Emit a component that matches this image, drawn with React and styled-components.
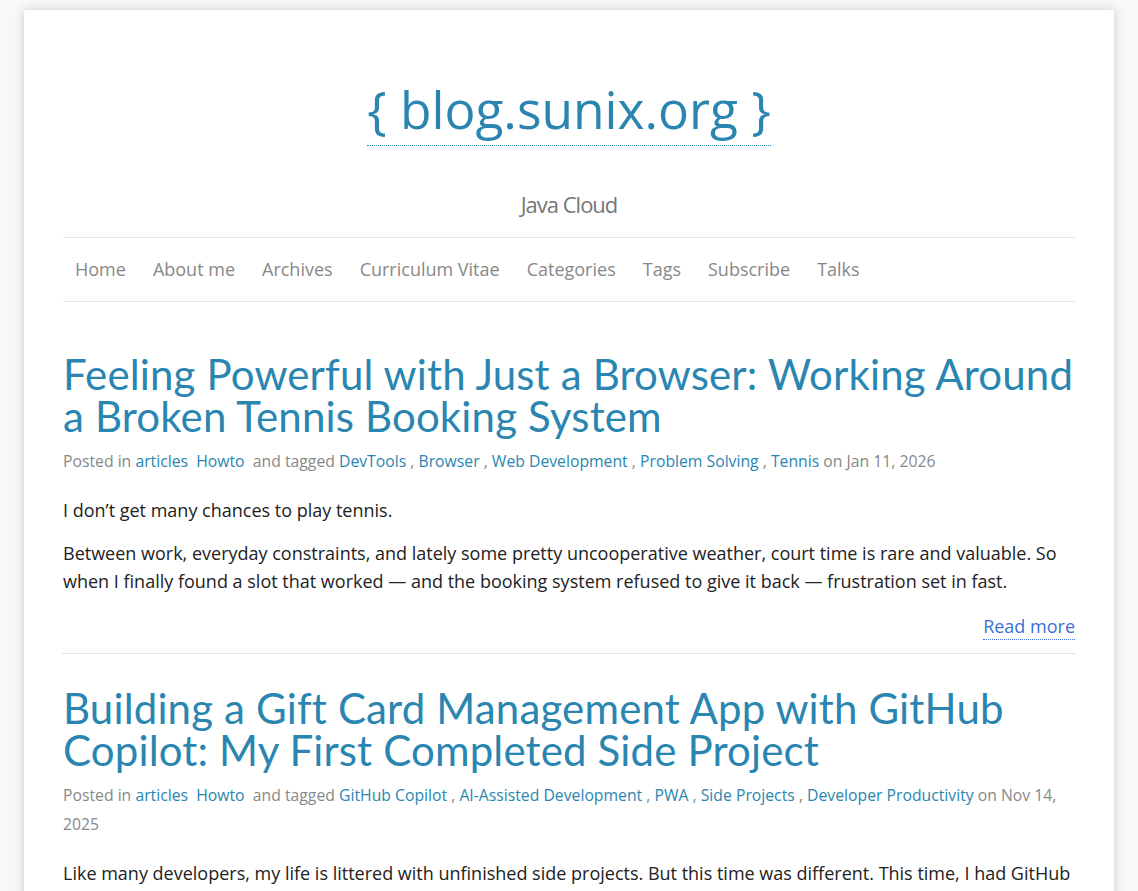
import React from "react";
import styled, { createGlobalStyle } from "styled-components";

const GlobalStyle = createGlobalStyle`
  html, body {
    margin: 0;
    padding: 0;
    background: #f8f8f8;
    font-family: "Open Sans", "Noto Sans", sans-serif;
    color: #222;
  }
  * {
    box-sizing: border-box;
  }
`;

const Page = styled.div`
  padding: 10px 24px 0;
`;

const Card = styled.div`
  background: #fff;
  box-shadow: 0 0 10px rgba(0, 0, 0, 0.18);
  padding: 0 39px 40px;
`;

const Header = styled.header`
  display: flex;
  flex-direction: column;
  align-items: center;
  padding-top: 74px;
`;

const SiteTitle = styled.a`
  font-size: 51.5px;
  line-height: 1;
  color: #2a86b0;
  text-decoration: none;
  border-bottom: 1px dotted #2a86b0;
  padding-bottom: 9px;
`;

const Tagline = styled.p`
  margin: 43px 0 0;
  font-size: 22px;
  letter-spacing: -1px;
  color: #777;
  line-height: 30px;
`;

const Nav = styled.nav`
  align-self: stretch;
  display: flex;
  gap: 27px;
  margin-top: 18px;
  padding: 0 12px;
  height: 65px;
  align-items: center;
  border-top: 1px solid #e6e6e6;
  border-bottom: 1px solid #e6e6e6;
`;

const NavItem = styled.a`
  font-size: 18px;
  color: #888;
  text-decoration: none;
`;

const Post = styled.article`
  padding-top: 51px;
  & + & {
    padding-top: 33px;
  }
  border-bottom: ${(p) => (p.last ? "none" : "1px dotted #ccc")};
  padding-bottom: ${(p) => (p.last ? "0" : "13px")};
`;

const PostTitle = styled.h2`
  margin: 0;
  font-family: Lato, "Open Sans", sans-serif;
  font-size: 42px;
  font-weight: 400;
  line-height: 42px;
  letter-spacing: 0.15px;
  color: #2a86b0;
`;

const Meta = styled.div`
  margin-top: 10px;
  font-size: 15.75px;
  line-height: 29px;
  color: #888;
`;

const MetaLink = styled.a`
  color: #2a86b0;
  text-decoration: none;
`;

const Body = styled.div`
  margin-top: 20px;
  font-size: 18px;
  line-height: 28px;
  color: #222;
  p {
    margin: 0 0 15px;
  }
`;

const ReadMoreRow = styled.div`
  display: flex;
  justify-content: flex-end;
  padding-top: 3px;
`;

const ReadMore = styled.a`
  font-size: 18px;
  line-height: 26px;
  color: #3b6fd8;
  text-decoration: none;
  border-bottom: 1px dotted #3b6fd8;
`;

const navItems = [
  "Home",
  "About me",
  "Archives",
  "Curriculum Vitae",
  "Categories",
  "Tags",
  "Subscribe",
  "Talks",
];

const posts = [
  {
    title:
      "Feeling Powerful with Just a Browser: Working Around a Broken Tennis Booking System",
    tags: ["DevTools", "Browser", "Web Development", "Problem Solving", "Tennis"],
    date: "Jan 11, 2026",
    paragraphs: [
      "I don’t get many chances to play tennis.",
      "Between work, everyday constraints, and lately some pretty uncooperative weather, court time is rare and valuable. So when I finally found a slot that worked — and the booking system refused to give it back — frustration set in fast.",
    ],
  },
  {
    title:
      "Building a Gift Card Management App with GitHub Copilot: My First Completed Side Project",
    tags: [
      "GitHub Copilot",
      "AI-Assisted Development",
      "PWA",
      "Side Projects",
      "Developer Productivity",
    ],
    date: "Nov 14, 2025",
    paragraphs: [
      "Like many developers, my life is littered with unfinished side projects. But this time was different. This time, I had GitHub Copilot at my side to help me get it over the finish line.",
    ],
  },
];

const PostEntry = ({ post, last }) => (
  <Post last={last}>
    <PostTitle>{post.title}</PostTitle>
    <Meta>
      Posted in <MetaLink href="#">articles</MetaLink>&nbsp; <MetaLink href="#">Howto</MetaLink>&nbsp;
      and tagged{" "}
      {post.tags.map((tag, i) => (
        <React.Fragment key={tag}>
          <MetaLink href="#">{tag}</MetaLink>
          {i < post.tags.length - 1 ? " , " : " "}
        </React.Fragment>
      ))}
      on {post.date}
    </Meta>
    <Body>
      {post.paragraphs.map((p) => (
        <p key={p}>{p}</p>
      ))}
    </Body>
    {!last && (
      <ReadMoreRow>
        <ReadMore href="#">Read more</ReadMore>
      </ReadMoreRow>
    )}
  </Post>
);

export default function App() {
  return (
    <>
      <GlobalStyle />
      <Page>
        <Card>
          <Header>
            <SiteTitle href="#">{"{ blog.sunix.org }"}</SiteTitle>
            <Tagline>Java Cloud</Tagline>
            <Nav>
              {navItems.map((item) => (
                <NavItem key={item} href="#">
                  {item}
                </NavItem>
              ))}
            </Nav>
          </Header>
          {posts.map((post, i) => (
            <PostEntry key={post.title} post={post} last={i === posts.length - 1} />
          ))}
        </Card>
      </Page>
    </>
  );
}
